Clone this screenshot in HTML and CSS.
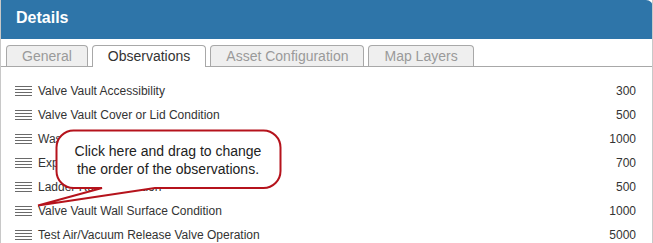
FILE: index.html
```html
<!DOCTYPE html>
<html lang="en">
<head>
    <meta charset="UTF-8">
    <title>Details</title>
    <link rel="stylesheet" href="styles.css">
</head>
<body>
<div class="panel">
    <div class="panel-header">Details</div>
    <div class="tabs">
        <div class="tab">General</div>
        <div class="tab active">Observations</div>
        <div class="tab">Asset Configuration</div>
        <div class="tab">Map Layers</div>
    </div>
    <ul class="obs-list">
        <li><span class="handle"></span><span class="obs-name">Valve Vault Accessibility</span><span class="obs-value">300</span></li>
        <li><span class="handle"></span><span class="obs-name">Valve Vault Cover or Lid Condition</span><span class="obs-value">500</span></li>
        <li><span class="handle"></span><span class="obs-name">Waste or Debris in Vault</span><span class="obs-value">1000</span></li>
        <li><span class="handle"></span><span class="obs-name">Exposed Piping Condition</span><span class="obs-value">700</span></li>
        <li><span class="handle"></span><span class="obs-name">Ladder Rung Condition</span><span class="obs-value">500</span></li>
        <li><span class="handle"></span><span class="obs-name">Valve Vault Wall Surface Condition</span><span class="obs-value">1000</span></li>
        <li><span class="handle"></span><span class="obs-name">Test Air/Vacuum Release Valve Operation</span><span class="obs-value">5000</span></li>
    </ul>

    <!-- tooltip callout over the list -->
    <svg class="callout-shape" width="653" height="243" viewBox="0 0 653 243">
        <path d="M73.5 130.5 H263.5 A17 17 0 0 1 280.5 147.5 V171 A17 17 0 0 1 263.5 188 H155 L38 205.5 L102 188 H73.5 A17 17 0 0 1 56.5 171 V147.5 A17 17 0 0 1 73.5 130.5 Z"
              fill="#fff" stroke="#b5131c" stroke-width="2" stroke-linejoin="miter"/>
    </svg>
    <div class="callout-text">Click here and drag to change<br>the order of the observations.</div>
</div>
</body>
</html>
```

FILE: styles.css
```css
body {
    margin: 0;
    font-family: "Liberation Sans", Arial, sans-serif;
    background-color: #fff;
}

.panel {
    position: relative;
    width: 653px;
    height: 243px;
    overflow: hidden;
    box-sizing: border-box;
    border-left: 1px solid #c8c8c8;
    border-right: 1px solid #c8c8c8;
}

.panel-header {
    height: 39px;
    margin: 0 -1px;
    padding-left: 16px;
    background-color: #2e75a9;
    border-top-right-radius: 7px;
    color: #fff;
    font-size: 16px;
    font-weight: bold;
    line-height: 35px;
}

.tabs {
    display: flex;
    gap: 4px;
    padding: 6px 0 0 5px;
    border-bottom: 1px solid #a8a8a8;
}

.tab {
    height: 20px;
    margin-bottom: -1px;
    padding: 0 15px;
    border: 1px solid #a8a8a8;
    border-bottom: none;
    border-radius: 4px 4px 0 0;
    background-color: #efefef;
    color: #9a9a9a;
    font-size: 14px;
    line-height: 21px;
}

.tab.active {
    height: 21px;
    background-color: #fff;
    color: #333;
}

.obs-list {
    list-style: none;
    margin: 0;
    padding: 12px 16px 0 14px;
}

.obs-list li {
    display: flex;
    align-items: center;
    height: 24px;
    font-size: 12px;
    color: #333;
}

.handle {
    width: 17px;
    height: 10px;
    margin-right: 6px;
    background: repeating-linear-gradient(to bottom, #6a6a6a 0, #6a6a6a 1px, transparent 1px, transparent 3px);
}

.obs-name {
    flex: 1;
}

.obs-value {
    text-align: right;
}

.callout-shape {
    position: absolute;
    left: -1px;
    top: 0;
}

.callout-text {
    position: absolute;
    left: 55px;
    top: 142px;
    width: 224px;
    text-align: center;
    font-size: 14px;
    line-height: 18px;
    color: #222;
}
```
